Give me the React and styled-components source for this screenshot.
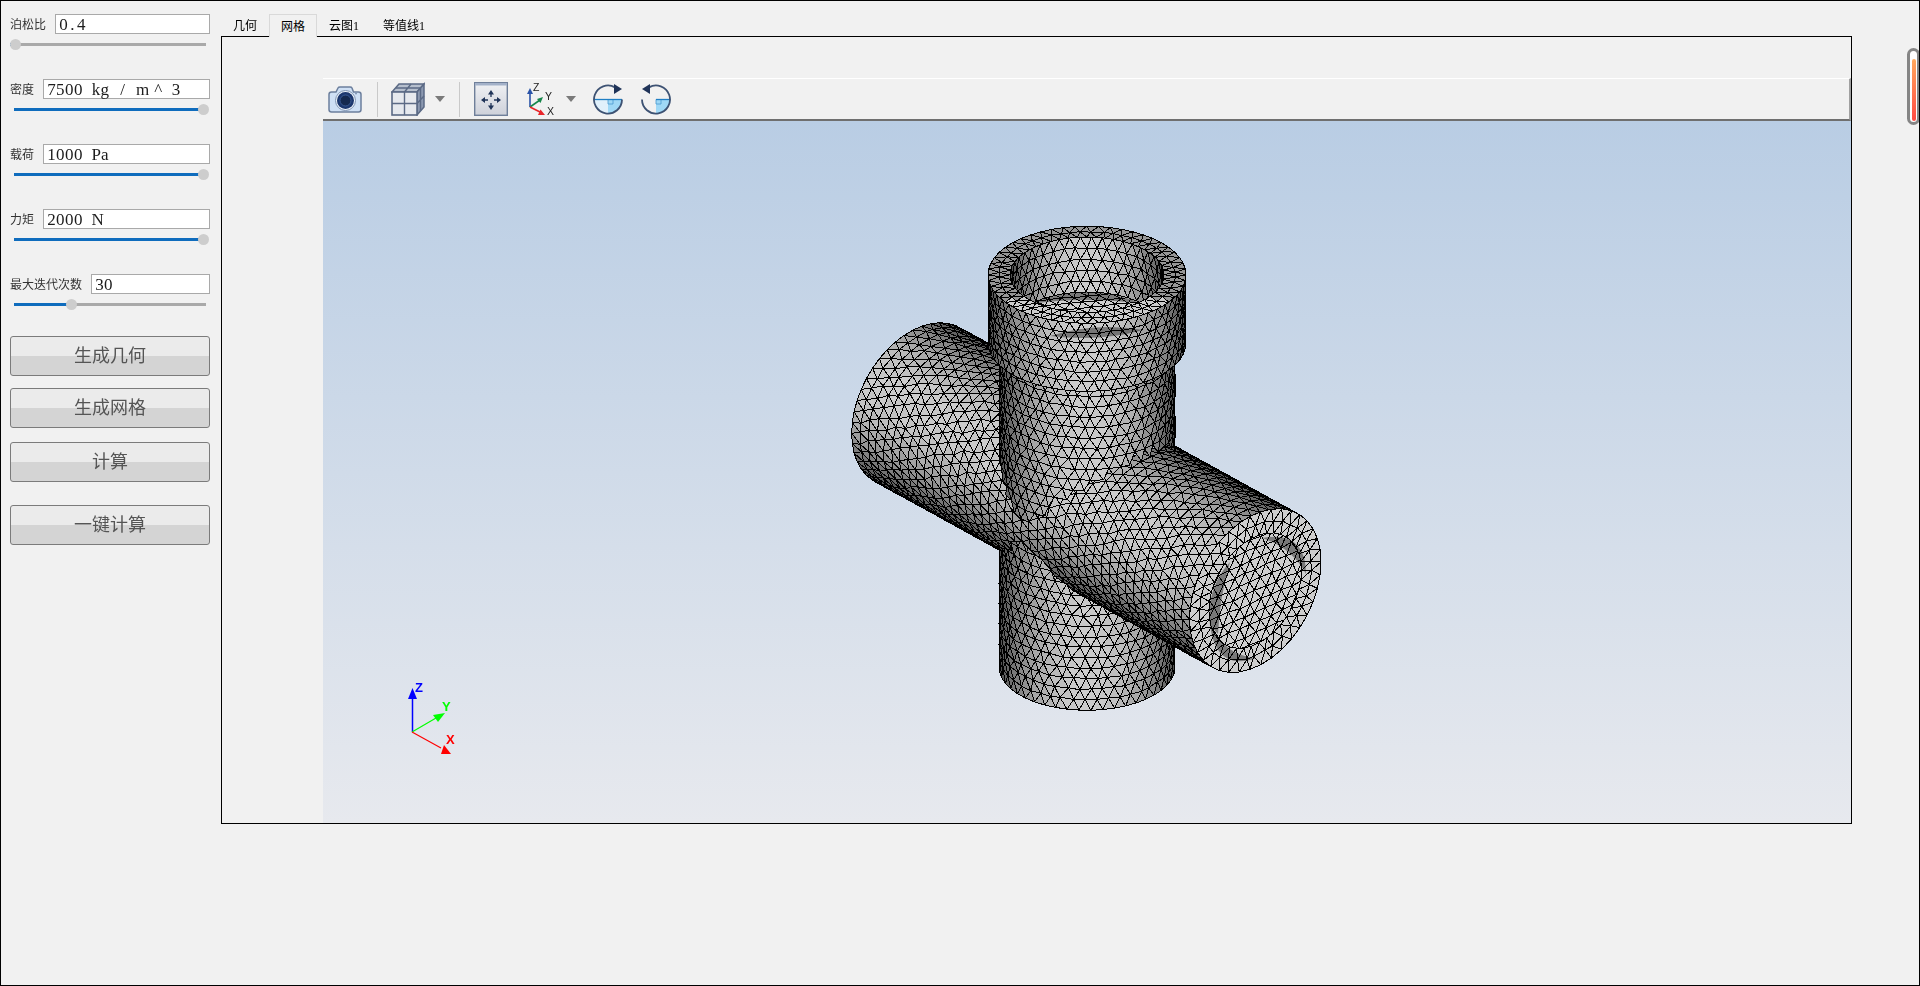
import styled, { createGlobalStyle } from "styled-components"

const GlobalStyle = createGlobalStyle`
    html, body {
        margin: 0;
        padding: 0;
        background: #f1f1f1;
        overflow: hidden;
    }
`

const UI_FONT = `"Liberation Serif", "Noto Sans CJK SC", serif`

const Window = styled.div`
    position: relative;
    display: flex;
    box-sizing: border-box;
    width: 1920px;
    height: 986px;
    border: 1px solid #000;
    background: #f1f1f1;
    font-family: ${UI_FONT};
    overflow: hidden;
`
const Sidebar = styled.aside`
    display: flex;
    flex-direction: column;
    box-sizing: border-box;
    flex: none;
    width: 220px;
    padding: 13px 11px 0 9px;
`
const Field = styled.div`
    display: flex;
    flex-direction: column;
    gap: 4px;
    margin-bottom: 29px;
`
const FieldRow = styled.div`
    display: flex;
    align-items: center;
    gap: 9px;
    height: 20px;
`
const Label = styled.label`
    flex: none;
    font-size: 12px;
    color: #333;
`
const ValueBox = styled.div`
    display: flex;
    align-items: center;
    flex: 1;
    box-sizing: border-box;
    height: 20px;
    padding: 1px 0 0 3px;
    border: 1px solid #a9a9a9;
    background: #fff;
    color: #1c1c1c;
    font-size: 17px;
    white-space: pre;
`
const Char = styled.span`
    flex: none;
    width: 8.9px;
    text-align: center;
`
const Slider = styled.div`
    position: relative;
    height: 12px;
    margin-left: ${p => p.$inset}px;
    margin-right: 4px;
`
const Track = styled.div`
    margin-top: 4.5px;
    height: 3px;
    background: #a9a9a9;
`
const TrackFill = styled.div`
    position: absolute;
    top: 4.5px;
    left: 0;
    height: 3px;
    background: #0f6cbd;
`
const Thumb = styled.div`
    position: absolute;
    top: 0.5px;
    width: 11px;
    height: 11px;
    border-radius: 50%;
    background: #cdcdcd;
`
const ButtonStack = styled.div`
    display: flex;
    flex-direction: column;
    margin-top: -3px;
`
const ActionButton = styled.button`
    box-sizing: border-box;
    height: 40px;
    margin-top: ${p => p.$gap}px;
    padding: 0 0 5px;
    border: 1px solid #7b7b7b;
    border-radius: 3px;
    background: linear-gradient(#ebebeb 50%, #d4d4d4 50%);
    color: #555;
    font-family: ${UI_FONT};
    font-size: 18px;
`
const Main = styled.main`
    display: flex;
    flex-direction: column;
    flex: none;
    width: 1631px;
    padding-top: 13px;
`
const TabBar = styled.div`
    display: flex;
    height: 22px;
`
const Tab = styled.div`
    display: flex;
    align-items: center;
    box-sizing: border-box;
    padding: 0 12px;
    font-size: 12px;
    color: #000;
    ${p => p.$active && `
        border: 1px solid #d9d9d9;
        border-bottom: none;
        margin-bottom: -1px;
        padding: 0 11px;
        position: relative;
        background: #f1f1f1;
    `}
`
const Pane = styled.div`
    display: flex;
    flex-direction: column;
    box-sizing: border-box;
    height: 788px;
    padding: 41px 0 0 101px;
    border: 1px solid #000;
`
const Toolbar = styled.div`
    display: flex;
    align-items: center;
    flex: none;
    box-sizing: border-box;
    height: 43px;
    padding-left: 5px;
    border-top: 1px solid #fff;
    border-right: 2px solid #a0a0a0;
    border-bottom: 2px solid #6f6f6f;
    background: #f1f1f1;
`
const ToolIcon = styled.svg`
    flex: none;
    margin-left: ${p => p.$ml || 0}px;
`
const AxisLetter = styled.text`
    font-family: "Liberation Sans", sans-serif;
    font-size: 10.5px;
    fill: #222;
`
const ToolSep = styled.span`
    flex: none;
    width: 1px;
    height: 35px;
    margin-left: ${p => p.$ml}px;
    background: #c9c9c9;
`
const Caret = styled.span`
    flex: none;
    width: 0;
    height: 0;
    margin-left: ${p => p.$ml}px;
    border-top: 6px solid #7a7a7a;
    border-left: 5px solid transparent;
    border-right: 5px solid transparent;
`
const Viewport = styled.div`
    flex: 1;
    min-height: 0;
    background: linear-gradient(#b9cde4, #e7e9ee);
`
const Scene = styled.svg`
    display: block;
    width: 100%;
    height: 100%;
`
const MeshGroup = styled.g`
    stroke: #000;
    stroke-width: 1;
    stroke-linejoin: bevel;
    shape-rendering: crispEdges;
`
const MeshShade = styled.path`
    fill: #969696;
    mix-blend-mode: multiply;
`
const TriadLabel = styled.text`
    font-family: "Liberation Sans", sans-serif;
    font-size: 13px;
    font-weight: bold;
`
const Indicator = styled.div`
    position: absolute;
    top: 47px;
    left: 1906px;
    display: flex;
    justify-content: center;
    align-items: flex-end;
    box-sizing: border-box;
    width: 13px;
    height: 77px;
    padding-bottom: 1px;
    border: 3px solid #858585;
    border-radius: 7px;
    background: #fff;
`
const IndicatorFill = styled.div`
    width: 4px;
    height: 62px;
    border-radius: 2px;
    background: linear-gradient(#ffa85c, #ff4a44);
`

// view of the part, same angles as the vtk camera in the shot
const sinA = 0.665
const cosA = 0.747
const sinE = 0.49
const cosE = 0.872
const ORIGIN = [1087, 498]
const VIEW = [cosA * cosE, -sinA * cosE, sinE]

const project = ([x, y, z]) => [
    ORIGIN[0] + x * sinA + y * cosA,
    ORIGIN[1] + x * cosA * sinE - y * sinA * sinE - z * cosE,
]

let seed = 1234
const rand = () => {
    seed = (seed * 16807) % 2147483647
    return seed / 2147483647 - 0.5
}

// peak is the best facing value the surface can reach
const shadeBy = peak => ndot => Math.round(74 + 130 * Math.pow(Math.min(ndot / peak, 1), 1.8))

// turns three 3d points into a drawable triangle, or null when it faces away
const makeTri = (a, b, c, outward, grayFor) => {
    const u = [b[0] - a[0], b[1] - a[1], b[2] - a[2]]
    const v = [c[0] - a[0], c[1] - a[1], c[2] - a[2]]
    let n = [u[1] * v[2] - u[2] * v[1], u[2] * v[0] - u[0] * v[2], u[0] * v[1] - u[1] * v[0]]
    const len = Math.hypot(n[0], n[1], n[2]) || 1
    n = n.map(k => k / len)
    const mid = [(a[0] + b[0] + c[0]) / 3, (a[1] + b[1] + c[1]) / 3, (a[2] + b[2] + c[2]) / 3]
    const out = outward(mid)
    if (n[0] * out[0] + n[1] * out[1] + n[2] * out[2] < 0) n = n.map(k => -k)
    const ndot = n[0] * VIEW[0] + n[1] * VIEW[1] + n[2] * VIEW[2]
    if (ndot <= 0.01) return null
    const pts = [a, b, c].map(project)
    const center = project(mid)
    return {
        mid,
        depth: mid[0] * VIEW[0] + mid[1] * VIEW[1] + mid[2] * VIEW[2],
        gray: grayFor(ndot, center),
        points: pts.map(p => `${p[0].toFixed(1)},${p[1].toFixed(1)}`).join(" "),
    }
}

// staggered strip, gives the near equilateral look of the gmsh surface mesh
const tube = ({ place, outward, from, to, rowH, segs, keep, grayFor, jitter = 0.16 }) => {
    const rows = Math.max(1, Math.round((to - from) / rowH))
    const dt = (to - from) / rows
    const dth = (Math.PI * 2) / segs
    const grid = []
    for (let j = 0; j <= rows; j++) {
        const row = []
        const edge = j === 0 || j === rows
        for (let i = 0; i < segs; i++) {
            const th = (i + (j % 2) * 0.5 + (edge ? 0 : rand() * jitter * 2)) * dth
            const t = from + j * dt + (edge ? 0 : rand() * jitter * dt)
            row.push(place(t, th))
        }
        grid.push(row)
    }
    const tris = []
    const push = (a, b, c) => {
        if (keep && !keep(a) && !keep(b) && !keep(c)) return
        const tri = makeTri(a, b, c, outward, grayFor)
        if (tri) tris.push(tri)
    }
    for (let j = 0; j < rows; j++) {
        for (let i = 0; i < segs; i++) {
            const k = (i + 1) % segs
            if (j % 2 === 0) {
                push(grid[j][i], grid[j][k], grid[j + 1][i])
                push(grid[j][k], grid[j + 1][k], grid[j + 1][i])
            } else {
                push(grid[j][i], grid[j + 1][k], grid[j + 1][i])
                push(grid[j][i], grid[j][k], grid[j + 1][k])
            }
        }
    }
    return tris
}

// triangular lattice over a round flat face
const disc = ({ place, outward, radius, step, grayFor }) => {
    const tris = []
    const h = step * 0.866
    const n = Math.ceil(radius / h) + 1
    const nodes = {}
    const get = (i, j) => {
        const key = `${i}:${j}`
        if (!nodes[key]) {
            nodes[key] = [(i + (j % 2 ? 0.5 : 0)) * step + rand() * step * 0.2, j * h + rand() * step * 0.2]
        }
        return nodes[key]
    }
    const add = (p, q, r) => {
        if ([p, q, r].every(m => Math.hypot(m[0], m[1]) > radius)) return
        const tri = makeTri(place(p), place(q), place(r), outward, grayFor)
        if (tri) tris.push(tri)
    }
    for (let j = -n; j < n; j++) {
        for (let i = -n; i < n; i++) {
            if (j % 2 === 0) {
                add(get(i, j), get(i + 1, j), get(i, j + 1))
                add(get(i + 1, j), get(i + 1, j + 1), get(i, j + 1))
            } else {
                add(get(i, j), get(i + 1, j), get(i + 1, j + 1))
                add(get(i, j), get(i + 1, j + 1), get(i, j + 1))
            }
        }
    }
    return tris
}

const byDepth = list => [...list].sort((a, b) => a.depth - b.depth)

const R = 88
const alongZ = r => (t, th) => [r * Math.cos(th), r * Math.sin(th), t]
const alongX = r => (t, th) => [t, r * Math.cos(th), r * Math.sin(th)]
const outZ = p => [p[0], p[1], 0]
const inZ = p => [-p[0], -p[1], 0]
const outX = p => [0, p[1], p[2]]
const shadeZ = shadeBy(0.872)
const shadeX = shadeBy(0.76)

const buildMesh = () => {
    const zBody = tube({
        place: alongZ(R),
        outward: outZ,
        from: -194,
        to: 178,
        rowH: 12,
        segs: 46,
        grayFor: shadeZ,
        keep: p => p[1] * p[1] + p[2] * p[2] > R * R,
    })
    const xBody = tube({
        place: alongX(R),
        outward: outX,
        from: -255,
        to: 253,
        rowH: 12,
        segs: 46,
        grayFor: shadeX,
        keep: p => p[0] * p[0] + p[1] * p[1] > R * R,
    })
    const lit = () => 206
    const holeFloor = disc({
        place: ([u, v]) => [u, v, 193],
        outward: () => [0, 0, 1],
        radius: 78,
        step: 13,
        grayFor: lit,
    })
    const holeWall = tube({
        place: alongZ(77),
        outward: inZ,
        from: 193,
        to: 256,
        rowH: 12,
        segs: 44,
        grayFor: shadeZ,
    })
    const flangeSide = tube({
        place: alongZ(99),
        outward: outZ,
        from: 178,
        to: 256,
        rowH: 12,
        segs: 52,
        grayFor: shadeZ,
    })
    const flangeTop = tube({
        place: (t, th) => [t * Math.cos(th), t * Math.sin(th), 256],
        outward: () => [0, 0, 1],
        from: 77,
        to: 99,
        rowH: 9,
        segs: 52,
        grayFor: (ndot, c) => (c[1] > 299 ? 204 : 150),
    })
    const endFloor = disc({
        place: ([u, v]) => [253, u, v],
        outward: () => [1, 0, 0],
        radius: 63,
        step: 14,
        grayFor: lit,
    })
    const endRing = tube({
        place: (t, th) => [253, t * Math.cos(th), t * Math.sin(th)],
        outward: () => [1, 0, 0],
        from: 62,
        to: 88,
        rowH: 12,
        segs: 38,
        grayFor: lit,
    })
    const outsideX = t => t.mid[1] * t.mid[1] + t.mid[2] * t.mid[2] > R * R
    return [
        ...byDepth(zBody.filter(t => t.mid[2] < 0)),
        ...byDepth(xBody),
        ...byDepth(zBody.filter(t => t.mid[2] >= 0 && outsideX(t))),
        ...endFloor,
        ...endRing,
        ...holeFloor,
        ...byDepth(holeWall),
        ...byDepth(flangeSide),
        ...flangeTop,
    ]
}

const MESH = buildMesh()

const CameraIcon = () => (
    <ToolIcon width="34" height="28" viewBox="0 0 34 28">
        <path d="M1 9.5Q1 7 3.5 7H8L10 3Q10.5 2 12 2H22Q23.5 2 24 3L25.5 7H30.5Q33 7 33 9.5V24.5Q33 27 30.5 27H3.5Q1 27 1 24.5Z" fill="#cfe0f5" stroke="#6c7f9d" strokeWidth="1.5" />
        <circle cx="17.5" cy="15.5" r="10" fill="#eef4fb" stroke="#7f93b2" strokeWidth="1" />
        <circle cx="17.5" cy="15.5" r="8.5" fill="#1c376e" />
        <circle cx="17.5" cy="15.5" r="5.5" fill="#15294f" stroke="#41639f" strokeWidth="0.8" />
        <circle cx="28" cy="8.5" r="1" fill="#7f93b2" />
    </ToolIcon>
)

const CubeIcon = () => (
    <ToolIcon width="34" height="34" viewBox="0 0 34 34" $ml={13}>
        <path d="M1 10L8 2H33L26 10Z" fill="#b6bfcd" stroke="#5b6a85" strokeWidth="1.5" />
        <path d="M26 10L33 2V25L26 33Z" fill="#8b98b0" stroke="#5b6a85" strokeWidth="1.5" />
        <rect x="1" y="10" width="25" height="23" fill="#e6e9ee" stroke="#5b6a85" strokeWidth="1.6" />
        <path d="M13.5 10V33M1 21.5H26M5 6H29M20 2L13.5 10M29.5 6V29M26 21.5L33 14" stroke="#5b6a85" strokeWidth="1.4" fill="none" />
    </ToolIcon>
)

const FitIcon = () => (
    <ToolIcon width="34" height="34" viewBox="0 0 34 34" $ml={14}>
        <defs>
            <linearGradient id="fitBody" x1="0" y1="0" x2="0" y2="1">
                <stop offset="0" stopColor="#f0f1f4" />
                <stop offset="1" stopColor="#ced1da" />
            </linearGradient>
        </defs>
        <rect x="0.7" y="0.7" width="32.6" height="32.6" fill="url(#fitBody)" stroke="#6f7f9a" strokeWidth="1.4" />
        <rect x="1" y="1" width="32" height="2.5" fill="#a3b1c9" />
        <path d="M17 12V15M17 21V24M10 18H14M20 18H24" stroke="#1f3358" strokeWidth="1.3" />
        <path d="M17 8L20 12.5H14ZM17 28L20 23.5H14ZM7 18L11 15V21ZM27 18L23 15V21Z" fill="#1f3358" />
    </ToolIcon>
)

const AxesIcon = () => (
    <ToolIcon width="30" height="34" viewBox="0 0 30 34" $ml={19}>
        <path d="M3 25V10" stroke="#2a53a8" strokeWidth="1.6" />
        <path d="M3 6L6 12H0Z" fill="#2a53a8" />
        <path d="M3 25L13 18" stroke="#17864a" strokeWidth="1.6" />
        <path d="M16 15L13.5 21L10 17Z" fill="#17864a" />
        <path d="M3 25L14 30.5" stroke="#e8262a" strokeWidth="1.6" />
        <path d="M18 33H11L13.5 27.5Z" fill="#e8262a" />
        <AxisLetter x="6" y="8.5">Z</AxisLetter>
        <AxisLetter x="18" y="17.5">Y</AxisLetter>
        <AxisLetter x="20" y="32.5">X</AxisLetter>
    </ToolIcon>
)

const RotateIcon = ({ flip, $ml }) => (
    <ToolIcon width="32" height="32" viewBox="0 0 32 32" $ml={$ml}>
        {!flip && <path d="M2 16.5H30A14 14 0 0 1 2 16.5Z" fill="#e0f0fb" />}
        <path d="M16 16.5H30A14 14 0 0 1 16 30.5Z" fill="#9fd8f6" />
        <path d="M16 16.5H21V21H16Z" fill="none" stroke="#4a9bd0" strokeWidth="0.8" />
        <path d={flip ? "M16 16.5H30" : "M2 16.5H30"} stroke="#1f7ec4" strokeWidth="1.3" />
        {flip ? (
            <>
                <path d="M9 4.4A14 14 0 1 1 2 16.5" fill="none" stroke="#3d5273" strokeWidth="1.8" />
                <path d="M2 6L10 1V11Z" fill="#1f3358" />
            </>
        ) : (
            <>
                <path d="M23 4.4A14 14 0 1 0 30 16.5" fill="none" stroke="#3d5273" strokeWidth="1.8" />
                <path d="M30 6L22 1V11Z" fill="#1f3358" />
            </>
        )}
    </ToolIcon>
)

const fields = [
    { label: "泊松比", value: "0.4", center: 5, inset: 0 },
    { label: "密度", value: "7500 kg / m ^ 3", center: 189, inset: 4 },
    { label: "载荷", value: "1000 Pa", center: 189, inset: 4 },
    { label: "力矩", value: "2000 N", center: 189, inset: 4 },
    { label: "最大迭代次数", value: "30", center: 57, inset: 4 },
]

const actions = [
    { text: "生成几何", gap: 0 },
    { text: "生成网格", gap: 12 },
    { text: "计算", gap: 14 },
    { text: "一键计算", gap: 23 },
]

const tabs = ["几何", "网格", "云图1", "等值线1"]

const ParamField = ({ label, value, center, inset }) => (
    <Field>
        <FieldRow>
            <Label>{label}</Label>
            <ValueBox>
                {value.split("").map((ch, i) => <Char key={i}>{ch}</Char>)}
            </ValueBox>
        </FieldRow>
        <Slider $inset={inset}>
            <Track />
            <TrackFill style={{ width: center }} />
            <Thumb style={{ left: center - 5.5 }} />
        </Slider>
    </Field>
)

const App = () => {
    return (
        <Window>
            <GlobalStyle />
            <Sidebar>
                {fields.map(f => <ParamField key={f.label} {...f} />)}
                <ButtonStack>
                    {actions.map(a => <ActionButton key={a.text} $gap={a.gap}>{a.text}</ActionButton>)}
                </ButtonStack>
            </Sidebar>
            <Main>
                <TabBar>
                    {tabs.map((t, i) => <Tab key={t} $active={i === 1}>{t}</Tab>)}
                </TabBar>
                <Pane>
                    <Toolbar>
                        <CameraIcon />
                        <ToolSep $ml={15} />
                        <CubeIcon />
                        <Caret $ml={10} />
                        <ToolSep $ml={14} />
                        <FitIcon />
                        <AxesIcon />
                        <Caret $ml={9} />
                        <RotateIcon $ml={16} />
                        <RotateIcon $ml={16} flip />
                    </Toolbar>
                    <Viewport>
                        <Scene viewBox="323 121 1528 702" preserveAspectRatio="xMinYMin">
                            <MeshGroup>
                                {MESH.map((t, i) => (
                                    <polygon key={i} points={t.points} fill={`rgb(${t.gray},${t.gray},${t.gray})`} />
                                ))}
                            </MeshGroup>
                            <MeshShade d="M1030 304Q1087 280 1143 304Q1087 296 1030 304Z" />
                            <MeshShade d="M1050 336Q1095 322 1143 330Q1100 342 1050 336Z" />
                            <MeshShade d="M1262 538Q1306 530 1306 574Q1292 548 1262 538Z" />
                            <MeshShade d="M1210 625Q1216 672 1256 658Q1226 656 1210 625Z" />
                            <MeshShade d="M1210 625Q1206 588 1230 562Q1220 595 1218 634Z" />

                            <path d="M412.5 732V696" stroke="#0000ff" strokeWidth="1.5" />
                            <path d="M412.5 688L417 699H408Z" fill="#0000ff" />
                            <TriadLabel x="415" y="692" fill="#0000ff">Z</TriadLabel>
                            <path d="M412 732L436 718" stroke="#00ff00" strokeWidth="1.2" />
                            <path d="M445 713L438 722L433 715Z" fill="#00ff00" />
                            <TriadLabel x="442" y="711" fill="#00ff00">Y</TriadLabel>
                            <path d="M412 732L441 748" stroke="#ff0000" strokeWidth="1.2" />
                            <path d="M451 754H441L444 745Z" fill="#ff0000" />
                            <TriadLabel x="446" y="744" fill="#ff0000">X</TriadLabel>
                        </Scene>
                    </Viewport>
                </Pane>
            </Main>
            <Indicator>
                <IndicatorFill />
            </Indicator>
        </Window>
    )
}

export default App
